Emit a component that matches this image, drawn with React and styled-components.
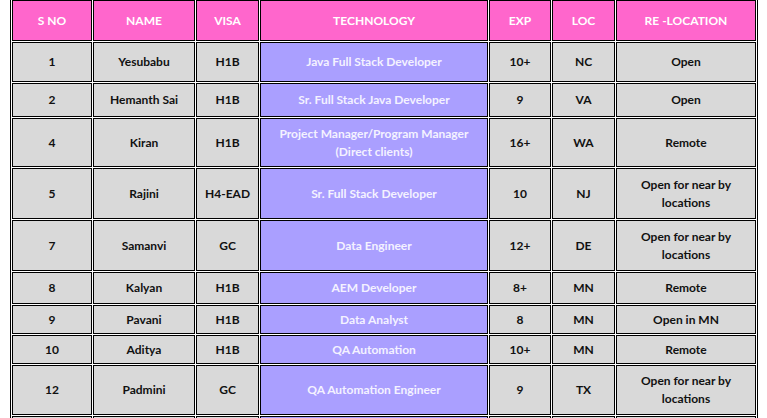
import React from 'react'
import styled, { createGlobalStyle } from 'styled-components';

const GlobalStyle = createGlobalStyle`
html, body {
  margin: 0;
  background: #ffffff;
  overflow: hidden;
}
`;

const Page = styled.div`
padding: 0 0 0 10px;
font-family: Lato, "Open Sans", sans-serif;
`;

const Table = styled.table`
margin-top: -2px;
width: 748px;
table-layout: fixed;
border: 1px solid #000;
border-spacing: 1px;
border-collapse: separate;
font-size: 12px;
font-weight: 700;`;

const HeadCell = styled.th`
box-sizing: border-box;
width: ${({w}) => w}px;
height: 41px;
background: #ff66cc;
color: #fff;
border: 1px solid #000;
padding: 0 4px;
text-align: center;
vertical-align: middle;
font-weight: 700;
line-height: 18px;`;

const Cell = styled.td`
box-sizing: border-box;
height: ${({h}) => h}px;
background: ${({tech}) => tech ? '#aa9fff' : '#d9d9d9'};
color: ${({tech}) => tech ? '#f4f2ff' : '#111'};
border: 1px solid #000;
padding: 0 6px;
text-align: center;
vertical-align: middle;
line-height: 18px;`;

const columns = [
  ['S NO', 80],
  ['NAME', 102],
  ['VISA', 63],
  ['TECHNOLOGY', 228],
  ['EXP', 62],
  ['LOC', 63],
  ['RE -LOCATION', 140],
];

const rows = [
  { h: 40, d: ['1', 'Yesubabu', 'H1B', 'Java Full Stack Developer', '10+', 'NC', 'Open'] },
  { h: 34, d: ['2', 'Hemanth Sai', 'H1B', 'Sr. Full Stack Java Developer', '9', 'VA', 'Open'] },
  { h: 49, d: ['4', 'Kiran', 'H1B', 'Project Manager/Program Manager (Direct clients)', '16+', 'WA', 'Remote'] },
  { h: 51, d: ['5', 'Rajini', 'H4-EAD', 'Sr. Full Stack Developer', '10', 'NJ', 'Open for near by locations'] },
  { h: 51, d: ['7', 'Samanvi', 'GC', 'Data Engineer', '12+', 'DE', 'Open for near by locations'] },
  { h: 32, d: ['8', 'Kalyan', 'H1B', 'AEM Developer', '8+', 'MN', 'Remote'] },
  { h: 29, d: ['9', 'Pavani', 'H1B', 'Data Analyst', '8', 'MN', 'Open in MN'] },
  { h: 29, d: ['10', 'Aditya', 'H1B', 'QA Automation', '10+', 'MN', 'Remote'] },
  { h: 50, d: ['12', 'Padmini', 'GC', 'QA Automation Engineer', '9', 'TX', 'Open for near by locations'] },
  { h: 32, d: ['', '', '', '', '', '', ''] },
];

const App = () => {
  return (
    <Page>
      <GlobalStyle />
      <Table>
        <thead>
          <tr>
            {columns.map(([label, w]) => (
              <HeadCell key={label} w={w}>{label}</HeadCell>
            ))}
          </tr>
        </thead>
        <tbody>
          {rows.map((row, r) => (
            <tr key={r}>
              {row.d.map((text, i) => (
                <Cell key={i} h={row.h} tech={i === 3}>{text}</Cell>
              ))}
            </tr>
          ))}
        </tbody>
      </Table>
    </Page>
  )
}

export default App
